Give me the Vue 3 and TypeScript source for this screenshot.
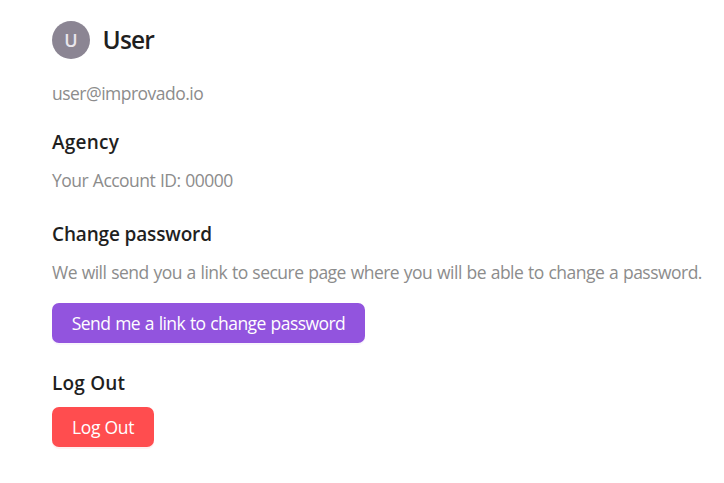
<script setup lang="ts">
const user = { name: 'User', email: 'user@improvado.io', agency: 'Agency', accountId: '00000' }
</script>

<template>
  <main class="profile">
    <header class="identity">
      <div class="avatar"><span>{{ user.name.charAt(0) }}</span></div>
      <h1><span>{{ user.name }}</span></h1>
    </header>
    <p class="email"><span>{{ user.email }}</span></p>
    <h2 class="agency"><span>{{ user.agency }}</span></h2>
    <p class="account"><span>Your Account ID: {{ user.accountId }}</span></p>
    <h2 class="password"><span>Change password</span></h2>
    <p class="hint"><span>We will send you a link to secure page where you will be able to change a password.</span></p>
    <button class="primary" type="button"><span>Send me a link to change password</span></button>
    <h2 class="logout"><span>Log Out</span></h2>
    <button class="danger" type="button"><span>Log Out</span></button>
  </main>
</template>

<style>
body { background: #fff; }
</style>

<style scoped>
.profile {
  box-sizing: border-box;
  height: 483px;
  padding: 21px 0 0 52px;
  display: flex;
  flex-direction: column;
  align-items: flex-start;
  font-family: "Open Sans", "Noto Sans", sans-serif;
  color: #1f1f1f;
  white-space: nowrap;
}
h1, h2, p { margin: 0; }
.identity { display: flex; align-items: center; gap: 12.5px; height: 38px; }
.avatar {
  width: 38px; height: 38px; border-radius: 50%;
  display: flex; align-items: center; justify-content: center;
  background: #8b8593; color: #e9e6ec; font-size: 18px; font-weight: 600;
}
h1 { font-size: 24.5px; line-height: 38px; font-weight: 600; letter-spacing: -0.8px; }
h2 { font-size: 19px; line-height: 28px; font-weight: 600; letter-spacing: -0.15px; }
p { font-size: 17.5px; line-height: 26px; color: #8c8c8c; letter-spacing: -0.52px; }
.email { margin-top: 21px; }
.agency { margin-top: 22px; letter-spacing: 0.25px; }
.account { margin-top: 11px; word-spacing: 0.7px; }
.password { margin-top: 27px; }
.hint { margin-top: 11px; word-spacing: 0.7px; }
button {
  height: 40px; padding: 0; border: 0; border-radius: 7px; color: #fff;
  font: 400 17.5px/40px "Open Sans", "Noto Sans", sans-serif;
}
.primary {
  width: 313px; margin-top: 18px; background: #9254de;
  letter-spacing: -0.55px; word-spacing: 0.7px;
  box-shadow: 0 2px 0 rgba(146, 84, 222, 0.06);
}
.logout { margin-top: 26px; letter-spacing: 0.2px; }
.danger {
  width: 102px; margin-top: 10px; background: #ff4d4f; letter-spacing: -0.3px;
  box-shadow: 0 2px 0 rgba(255, 77, 79, 0.08);
}
</style>
